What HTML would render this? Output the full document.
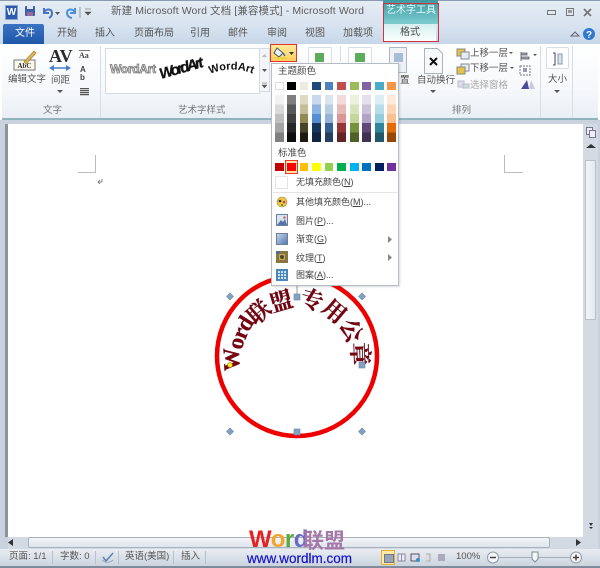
<!DOCTYPE html>
<html><head><meta charset="utf-8">
<style>
html,body{margin:0;padding:0}
body{width:600px;height:568px;overflow:hidden;position:relative;background:#fff;font-family:"Liberation Sans","Noto Sans CJK SC",sans-serif;font-size:9px;color:#555}
.a{position:absolute}
.t{position:absolute;white-space:nowrap;line-height:12px}
.sw{position:absolute;width:8.500px;height:8px}
.col{position:absolute;top:95px;width:8.500px;height:47px}
.sep{position:absolute;width:1px;background:#d5dde6}
.mi{position:absolute;left:296px;white-space:nowrap;font-size:9px;color:#444;line-height:12px}
</style></head><body>
<!-- window frame / title -->
<div class="a" style="left:0;top:0;width:600px;height:24px;background:linear-gradient(#e6edf5,#d8e3ef)"></div>
<div class="a" style="left:0;top:0;width:600px;height:1px;background:#8a9bb0"></div>
<!-- tab band -->
<div class="a" style="left:0;top:24px;width:600px;height:20px;background:linear-gradient(#d9e4f0,#c7d7e8)"></div>
<!-- ribbon -->
<div class="a" style="left:2px;top:44px;width:596px;height:74px;background:linear-gradient(#fff,#f6f8fb 60%,#eaeff5);border-bottom:2px solid #8fb4bc"></div>
<div class="a" style="left:0;top:120px;width:600px;height:429px;background:#c9d2dd"></div>
<div class="a" style="left:5px;top:124px;width:3px;height:413px;background:#8e9499"></div>
<!-- page -->
<div class="a" style="left:8px;top:124px;width:575px;height:413px;background:#fff"></div>

<!-- QAT -->
<div class="a" style="left:5px;top:5px;width:11px;height:13px;background:#2a5bb0;border:1px solid #8aa3c8;color:#fff;font:bold 10px/13px 'Liberation Sans';text-align:center">W</div>
<div class="a" style="left:25px;top:6px;width:10px;height:10px;background:#3d5fa8;border-radius:1px"></div>
<div class="a" style="left:27px;top:6px;width:6px;height:3px;background:#dfe7f2"></div>
<div class="a" style="left:27px;top:12px;width:6px;height:4px;background:#9a6a9c"></div>
<svg class="a" style="left:40px;top:4px" width="50" height="16"><path d="M4 4v5h5M4 8c3-4 8-3 8 1 0 2-1 4-3 5" fill="none" stroke="#4674c4" stroke-width="2"/><path d="M15 8h5l-2.500 3z" fill="#555"/><path d="M35 4v5h-5M35 8c-3-4-8-3-8 1 0 3 3 5 5 5" fill="none" stroke="#4a90d8" stroke-width="2"/><path d="M40 3v11" stroke="#99a" stroke-width="1"/></svg>
<svg class="a" style="left:84px;top:8px" width="8" height="10"><path d="M1 1h6M1 4h6l-3 3z" fill="#555" stroke="#555" stroke-width=".6"/></svg>
<div class="t" style="left:111px;top:5px;font-size:10.500px;color:#5c5c5c;letter-spacing:.1px">新建 Microsoft Word 文档 [兼容模式]  -  Microsoft Word</div>

<!-- window buttons -->
<svg class="a" style="left:544px;top:6px" width="50" height="14"><rect x="3.500" y="4.500" width="8" height="4" fill="none" stroke="#777"/><rect x="22.500" y="2.500" width="7" height="7" fill="none" stroke="#777"/><rect x="24" y="4" width="4" height="3" fill="#999"/><path d="M40 3l7 7M47 3l-7 7" stroke="#777" stroke-width="1.800"/></svg>

<!-- contextual tab -->
<div class="a" style="left:383px;top:0;width:55px;height:24px;background:linear-gradient(#3e9aa0,#7dcdd0)"></div>
<div class="t" style="left:386px;top:5px;font-size:10px;color:#e8ffff">艺术字工具</div>
<div class="a" style="left:383px;top:24px;width:53px;height:17px;background:linear-gradient(#d7f0f0,#fbfefe)"></div>
<div class="a" style="left:383px;top:3px;width:54px;height:37px;border:1px solid #d43040"></div>
<div class="t" style="left:400px;top:27px;font-size:10px;color:#4c4c4c">格式</div>

<!-- tabs -->
<div class="a" style="left:3px;top:24px;width:41px;height:20px;background:linear-gradient(#3a72c4,#1f56a8);border-radius:2px 2px 0 0"></div>
<div class="t" style="left:15px;top:28px;font-size:10px;color:#fff">文件</div>
<div class="t" style="left:57px;top:28px;font-size:10px">开始</div>
<div class="t" style="left:95px;top:28px;font-size:10px">插入</div>
<div class="t" style="left:134px;top:28px;font-size:10px">页面布局</div>
<div class="t" style="left:190px;top:28px;font-size:10px">引用</div>
<div class="t" style="left:228px;top:28px;font-size:10px">邮件</div>
<div class="t" style="left:267px;top:28px;font-size:10px">审阅</div>
<div class="t" style="left:305px;top:28px;font-size:10px">视图</div>
<div class="t" style="left:343px;top:28px;font-size:10px">加载项</div>
<svg class="a" style="left:568px;top:27px" width="30" height="16"><path d="M3 9l4-4 4 4z" fill="none" stroke="#667" /><circle cx="21" cy="7" r="6" fill="#2f79d0"/><text x="21" y="11" font-size="10" font-weight="bold" font-family="Liberation Sans" text-anchor="middle" fill="#fff">?</text></svg>

<!-- text group -->
<svg class="a" style="left:12px;top:48px" width="26" height="26"><rect x="2" y="12" width="21" height="10" fill="#fdf8ec" stroke="#777"/><text x="12.500" y="20" font-size="7" font-family="Liberation Serif" font-weight="bold" text-anchor="middle" fill="#333">AbC</text><path d="M12 14L22 3l2 2-10 11z" fill="#e4b74a" stroke="#97803c" stroke-width=".7"/></svg>
<div class="t" style="left:8px;top:74px;font-size:9.500px">编辑文字</div>
<div class="t" style="left:49px;top:46px;font:bold 18px/20px 'Liberation Serif';color:#2a2a2a">AV</div>
<svg class="a" style="left:48px;top:64px" width="24" height="8"><path d="M2 4h20" stroke="#4a7fd0" stroke-width="1.500"/><path d="M1 4l5-3v6zM23 4l-5-3v6z" fill="#4a7fd0"/></svg>
<div class="t" style="left:51px;top:75px;font-size:9.500px">间距</div>
<svg class="a" style="left:57px;top:90px" width="6" height="4"><path d="M0 0h6l-3 3z" fill="#555"/></svg>
<div class="a" style="left:79px;top:50px;width:11px;height:1px;background:#777"></div>
<div class="t" style="left:79px;top:51px;font:bold 8px/10px 'Liberation Serif';color:#444">Aa</div>
<div class="t" style="left:80px;top:66px;font:bold 8px/8px 'Liberation Sans';color:#444">A<br>b</div>
<div class="a" style="left:80px;top:88px;width:9px;height:8px;background:repeating-linear-gradient(#555 0 1px,#ccc 1px 2px)"></div>
<div class="sep" style="left:100px;top:46px;height:72px"></div>
<div class="t" style="left:43px;top:105px;font-size:9.500px;color:#777">文字</div>

<!-- wordart gallery -->
<div class="a" style="left:105px;top:48px;width:153px;height:44px;background:#fff;border:1px solid #d4dbe4"></div>
<div class="t" style="left:110px;top:62px;font:bold 12px/14px 'Liberation Sans';color:#ddd;-webkit-text-stroke:.8px #777;letter-spacing:-.3px">WordArt</div>
<svg class="a" style="left:158px;top:54px" width="50" height="30"><text x="3" y="25" font-size="15" font-family="Liberation Sans" font-weight="bold" font-style="italic" fill="#111" stroke="#111" stroke-width=".3" transform="rotate(-16 3 25)" textLength="45">WordArt</text></svg>
<svg class="a" style="left:208px;top:60px" width="48" height="20"><path id="wa" d="M2 14Q23 5 46 14" fill="none"/><text font-size="11" font-family="Liberation Sans" font-weight="bold" fill="#111"><textPath href="#wa" textLength="44">WordArt</textPath></text></svg>
<div class="a" style="left:259px;top:48px;width:11px;height:44px;background:#f3f5f8;border:1px solid #d4dbe4;box-sizing:border-box"></div>
<svg class="a" style="left:259px;top:50px" width="11" height="40"><path d="M3 7l2.500-3L8 7z" fill="#bbb"/><path d="M3 19h5l-2.500 3z" fill="#555"/><path d="M3 33h5M3 35h5l-2.500 3z" stroke="#555" stroke-width=".5" fill="#555"/></svg>
<div class="t" style="left:178px;top:105px;font-size:9.500px;color:#777">艺术字样式</div>

<!-- fill button -->
<div class="a" style="left:270px;top:44px;width:27px;height:18px;background:linear-gradient(#fdeb9c,#fbcf5c);border:1px solid #e83030;box-sizing:border-box"></div>
<svg class="a" style="left:272px;top:46px" width="24" height="14"><path d="M5 2l6 5-4 4-5-4z" fill="#eef3fa" stroke="#456"/><path d="M11 7l2 3" stroke="#3a6cc0" stroke-width="1.500"/><rect x="2" y="11" width="13" height="2" fill="#e8d24a"/><path d="M17 6h5l-2.500 3z" fill="#333"/></svg>

<!-- drawing tools behind menu -->
<div class="a" style="left:308px;top:47px;width:22px;height:15px;background:#fff;border:1px solid #d8dee6;border-bottom:0"></div>
<div class="a" style="left:315px;top:53px;width:9px;height:9px;background:#5dab5d"></div>
<div class="a" style="left:348px;top:47px;width:22px;height:15px;background:#fff;border:1px solid #d8dee6;border-bottom:0"></div>
<div class="a" style="left:355px;top:53px;width:10px;height:9px;background:#5dab5d"></div>
<div class="sep" style="left:340px;top:46px;height:16px"></div>

<!-- arrange -->
<svg class="a" style="left:389px;top:47px" width="20" height="27"><rect x=".5" y=".5" width="17" height="25" fill="#eef2f7" stroke="#aeb8c4"/><rect x="5" y="6" width="9" height="9" fill="#a9bcd6"/></svg>
<div class="t" style="left:400px;top:75px;font-size:9.500px;color:#444">置</div>
<svg class="a" style="left:424px;top:48px" width="20" height="27"><path d="M.5.5h13l5 5v20H.5z" fill="#f7f9fc" stroke="#aab2bd"/><path d="M6 10l7 7M13 10l-7 7" stroke="#111" stroke-width="2"/></svg>
<div class="t" style="left:417px;top:75px;font-size:9.500px">自动换行</div>
<svg class="a" style="left:430px;top:90px" width="6" height="4"><path d="M0 0h6l-3 3z" fill="#555"/></svg>
<svg class="a" style="left:456px;top:47px" width="15" height="42"><rect x="1" y="2" width="8" height="7" fill="#e4c24c" stroke="#887"/><rect x="5" y="5" width="8" height="7" fill="#e6ecf4" stroke="#889"/><rect x="5" y="17" width="8" height="7" fill="#e6ecf4" stroke="#889"/><rect x="1" y="20" width="8" height="7" fill="#e4c24c" stroke="#887"/><rect x="2" y="34" width="6" height="6" fill="#dde" stroke="#bbc"/><rect x="7" y="37" width="6" height="4" fill="#cdd" stroke="#bbc"/></svg>
<div class="t" style="left:470px;top:48px;font-size:9.500px">上移一层</div>
<div class="t" style="left:470px;top:63px;font-size:9.500px">下移一层</div>
<div class="t" style="left:470px;top:80px;font-size:9.500px;color:#aaa">选择窗格</div>
<svg class="a" style="left:509px;top:52px" width="30" height="42"><path d="M0 0h4l-2 2zM1 15h4l-2 2z" fill="#555"/><path d="M12 -1v10M12 1h6v2h-6M12 5h8v2h-8" stroke="#556" fill="#aaa" stroke-width=".8"/><path d="M28 2h-4l2 2z" fill="#555"/><rect x="11" y="14" width="10" height="9" fill="none" stroke="#778" stroke-dasharray="2 1"/><rect x="14" y="16" width="4" height="4" fill="#99a"/><path d="M12 37l6-9 2 9z" fill="#4b4a9b"/><path d="M20 37l2-9 4 9z" fill="#c8c8e0"/></svg>
<div class="t" style="left:452px;top:105px;font-size:9.500px;color:#777">排列</div>
<div class="sep" style="left:540px;top:46px;height:72px"></div>
<div class="a" style="left:546px;top:47px;width:21px;height:20px;background:#fff;border:1px solid #d8dee6;border-radius:2px"></div>
<svg class="a" style="left:552px;top:52px" width="12" height="14"><path d="M1 1h2v12H1M3 2v10" stroke="#445" fill="none"/><rect x="6" y="2" width="4" height="10" fill="#d9e2ee" stroke="#8898ab"/></svg>
<div class="t" style="left:548px;top:74px;font-size:9.500px">大小</div>
<svg class="a" style="left:554px;top:90px" width="6" height="4"><path d="M0 0h6l-3 3z" fill="#555"/></svg>
<div class="sep" style="left:572px;top:46px;height:72px"></div>

<!-- page margins -->
<div class="a" style="left:78px;top:155px;width:17px;height:17px;border-right:1px solid #bbb;border-bottom:1px solid #bbb"></div>
<div class="a" style="left:504px;top:155px;width:18px;height:17px;border-left:1px solid #bbb;border-bottom:1px solid #bbb"></div>
<svg class="a" style="left:96px;top:178px" width="7" height="7"><path d="M6 1v3H2M2 4l2-2M2 4l2 2" stroke="#666" fill="none" stroke-width=".8"/></svg>

<!-- stamp: centre (297,356) -->
<svg class="a" style="left:200px;top:270px" width="200" height="180">
<circle cx="97" cy="86" r="80" fill="none" stroke="#ee0000" stroke-width="4.500"/>
<g font-family="'Liberation Serif','Noto Serif CJK SC',serif" font-weight="bold" fill="#7c0010" stroke="#3c0008" stroke-width=".25" text-anchor="middle" font-size="23">
<text transform="translate(97 86) rotate(-93) translate(0 -66)" y="8">W</text>
<text transform="translate(97 86) rotate(-78) translate(0 -63)" y="8">o</text>
<text transform="translate(97 86) rotate(-68) translate(0 -62)" y="8">r</text>
<text transform="translate(97 86) rotate(-58) translate(0 -62)" y="8">d</text>
<text transform="translate(97 86) rotate(-41) translate(0 -58)" y="8">联</text>
<text transform="translate(97 86) rotate(-16) translate(0 -57)" y="8">盟</text>
<text transform="translate(97 86) rotate(15) translate(0 -58)" y="8">专</text>
<text transform="translate(97 86) rotate(40) translate(0 -58)" y="8">用</text>
<text transform="translate(97 86) rotate(65) translate(0 -60)" y="8">公</text>
<text transform="translate(97 86) rotate(88) translate(0 -63)" y="8">章</text>
</g>
<path d="M97 10v16" stroke="#999" stroke-width="1"/>
<g fill="#83a1c4" stroke="#6d87a6" stroke-width=".6">
<path d="M30 23l3.500 3.500-3.500 3.500-3.500-3.500zM162 23l3.500 3.500-3.500 3.500-3.500-3.500zM30 158l3.500 3.500-3.500 3.500-3.500-3.500zM162 158l3.500 3.500-3.500 3.500-3.500-3.500z"/>
<rect x="94" y="24" width="6" height="6"/><rect x="159" y="92" width="6" height="6"/><rect x="94" y="159" width="6" height="6"/>
</g>
<circle cx="30" cy="95" r="2.500" fill="#ffee22" stroke="#997700" stroke-width=".6"/>
</svg>

<!-- dropdown menu -->
<div class="a" style="left:271px;top:63px;width:128px;height:223px;background:#fff;border:1px solid #b5bcc5;box-sizing:border-box;box-shadow:1px 1px 2px rgba(0,0,0,.15)"></div>
<div class="t" style="left:278px;top:66px;font-size:9.500px;color:#444">主题颜色</div>
<div class="t" style="left:278px;top:148px;font-size:9.500px;color:#444">标准色</div>
<!-- swatches -->
<div class="sw" style="left:275px;top:82px;background:#fff;border:1px solid #ddd;box-sizing:border-box"></div>
<div class="sw" style="left:287px;top:82px;background:#000"></div>
<div class="sw" style="left:299.500px;top:82px;background:#eeece1"></div>
<div class="sw" style="left:312px;top:82px;background:#1f497d"></div>
<div class="sw" style="left:324.500px;top:82px;background:#4f81bd"></div>
<div class="sw" style="left:337px;top:82px;background:#c0504d"></div>
<div class="sw" style="left:350px;top:82px;background:#9bbb59"></div>
<div class="sw" style="left:362px;top:82px;background:#8064a2"></div>
<div class="sw" style="left:375px;top:82px;background:#4bacc6"></div>
<div class="sw" style="left:387px;top:82px;background:#f79646"></div>
<!-- shades -->
<div class="col" style="left:275px;background:linear-gradient(#f2f2f2 0 20%,#d9d9d9 20% 40%,#bfbfbf 40% 60%,#a6a6a6 60% 80%,#808080 80%)"></div>
<div class="col" style="left:287px;background:linear-gradient(#7f7f7f 0 20%,#595959 20% 40%,#404040 40% 60%,#262626 60% 80%,#0d0d0d 80%)"></div>
<div class="col" style="left:299.500px;background:linear-gradient(#ddd9c3 0 20%,#c4bd97 20% 40%,#938953 40% 60%,#494429 60% 80%,#1d1b10 80%)"></div>
<div class="col" style="left:312px;background:linear-gradient(#c6d9f0 0 20%,#8db3e2 20% 40%,#548dd4 40% 60%,#17365d 60% 80%,#0f243e 80%)"></div>
<div class="col" style="left:324.500px;background:linear-gradient(#dbe5f1 0 20%,#b8cce4 20% 40%,#95b3d7 40% 60%,#366092 60% 80%,#244061 80%)"></div>
<div class="col" style="left:337px;background:linear-gradient(#f2dcdb 0 20%,#e5b9b7 20% 40%,#d99694 40% 60%,#953734 60% 80%,#632423 80%)"></div>
<div class="col" style="left:350px;background:linear-gradient(#ebf1dd 0 20%,#d7e3bc 20% 40%,#c3d69b 40% 60%,#76923c 60% 80%,#4f6128 80%)"></div>
<div class="col" style="left:362px;background:linear-gradient(#e5e0ec 0 20%,#ccc1d9 20% 40%,#b2a2c7 40% 60%,#5f497a 60% 80%,#3f3151 80%)"></div>
<div class="col" style="left:375px;background:linear-gradient(#dbeef3 0 20%,#b7dde8 20% 40%,#92cddc 40% 60%,#31859b 60% 80%,#205867 80%)"></div>
<div class="col" style="left:387px;background:linear-gradient(#fdeada 0 20%,#fbd5b5 20% 40%,#fac08f 40% 60%,#e36c09 60% 80%,#974806 80%)"></div>
<!-- standard -->
<div class="sw" style="left:275px;top:163px;background:#c00000"></div>
<div class="a" style="left:285px;top:160px;width:13px;height:14px;border:1px solid #e33;background:#fde5a0;box-sizing:border-box"></div>
<div class="sw" style="left:287px;top:163px;background:#ff0000"></div>
<div class="sw" style="left:299.500px;top:163px;background:#ffc000"></div>
<div class="sw" style="left:312px;top:163px;background:#ffff00"></div>
<div class="sw" style="left:324.500px;top:163px;background:#92d050"></div>
<div class="sw" style="left:337px;top:163px;background:#00b050"></div>
<div class="sw" style="left:350px;top:163px;background:#00b0f0"></div>
<div class="sw" style="left:362px;top:163px;background:#0070c0"></div>
<div class="sw" style="left:375px;top:163px;background:#002060"></div>
<div class="sw" style="left:387px;top:163px;background:#7030a0"></div>
<!-- items -->
<div class="a" style="left:275px;top:176px;width:13px;height:13px;border:1px solid #e4e4e4;box-sizing:border-box"></div>
<div class="mi" style="top:176px">无填充颜色(<u>N</u>)</div>
<div class="a" style="left:273px;top:192px;width:124px;height:1px;background:#e4e4e4"></div>
<svg class="a" style="left:276px;top:196px" width="12" height="12"><circle cx="6" cy="6" r="5" fill="#ecc84a" stroke="#a08a30" stroke-width=".6"/><circle cx="4" cy="5" r="1.300" fill="#333"/><circle cx="8" cy="6" r="1.300" fill="#c44"/><circle cx="6" cy="9" r="1" fill="#3a8a3a"/></svg>
<div class="mi" style="top:196px">其他填充颜色(<u>M</u>)...</div>
<svg class="a" style="left:276px;top:214px" width="12" height="12"><rect x=".5" y=".5" width="11" height="11" fill="#d8e4f2" stroke="#6a7f9c"/><path d="M1 11l4-5 2 2 2-3 2 6z" fill="#5a72a8"/><circle cx="8.500" cy="3.500" r="1.300" fill="#d66"/></svg>
<div class="mi" style="top:215px">图片(<u>P</u>)...</div>
<div class="a" style="left:276px;top:233px;width:12px;height:12px;background:linear-gradient(135deg,#c4d6ee,#5578b0);border:1px solid #6d7f9a;box-sizing:border-box"></div>
<div class="mi" style="top:233px">渐变(<u>G</u>)</div>
<svg class="a" style="left:388px;top:236px" width="5" height="7"><path d="M0 0l4 3.500L0 7z" fill="#888"/></svg>
<svg class="a" style="left:276px;top:251px" width="12" height="12"><rect width="12" height="12" fill="#8a7440"/><rect x="3" y="3" width="6" height="6" fill="#c2a85e"/><circle cx="6" cy="6" r="2" fill="#4a4a2a"/><rect x="0" y="0" width="4" height="3" fill="#556d88"/></svg>
<div class="mi" style="top:252px">纹理(<u>T</u>)</div>
<svg class="a" style="left:388px;top:254px" width="5" height="7"><path d="M0 0l4 3.500L0 7z" fill="#888"/></svg>
<div class="a" style="left:276px;top:269px;width:12px;height:12px;box-sizing:border-box;border:1px solid #4a86b8;background:repeating-linear-gradient(90deg,#4a86b8 0 1px,transparent 1px 3px),repeating-linear-gradient(#4a86b8 0 1px,#cfe4f3 1px 3px)"></div>
<div class="mi" style="top:269px">图案(<u>A</u>)...</div>

<!-- vertical scrollbar -->
<div class="a" style="left:583px;top:124px;width:15px;height:425px;background:#d3dae3"></div>
<svg class="a" style="left:586px;top:127px" width="11" height="12"><rect x=".5" y=".5" width="6" height="7" fill="#eef" stroke="#778"/><rect x="3.500" y="3.500" width="6" height="7" fill="#eef" stroke="#778"/></svg>
<svg class="a" style="left:586px;top:143px" width="10" height="6"><path d="M0 5l5-4 5 4z" fill="#333"/></svg>
<div class="a" style="left:585px;top:160px;width:11px;height:160px;background:linear-gradient(90deg,#f2f5f8,#e4e9ef);border:1px solid #b7c0cb;box-sizing:border-box"></div>
<svg class="a" style="left:587px;top:522px" width="8" height="8"><path d="M2 1h4L4 4zM2 5h4L4 7z" fill="#333"/></svg>

<!-- horizontal scrollbar -->
<div class="a" style="left:8px;top:537px;width:575px;height:12px;background:#d3dae3"></div>
<svg class="a" style="left:7px;top:539px" width="8" height="8"><path d="M6 0v7L1 3.500z" fill="#333"/></svg>
<div class="a" style="left:28px;top:537px;width:522px;height:11px;background:linear-gradient(#f2f5f8,#dfe5ec);border:1px solid #a8b2be;border-radius:2px;box-sizing:border-box"></div>
<svg class="a" style="left:576px;top:539px" width="6" height="8"><path d="M0 0v7l5-3.500z" fill="#333"/></svg>

<!-- status bar -->
<div class="a" style="left:0;top:549px;width:600px;height:17px;background:linear-gradient(#e9edf2,#ccd4de)"></div>
<div class="a" style="left:0;top:566px;width:600px;height:2px;background:#7d8b9c"></div>
<div class="t" style="left:9px;top:551px;font-size:9.500px">页面: 1/1</div>
<div class="sep" style="left:52px;top:551px;height:13px;background:#b7c0cb"></div>
<div class="t" style="left:60px;top:551px;font-size:9.500px">字数: 0</div>
<div class="sep" style="left:95px;top:551px;height:13px;background:#b7c0cb"></div>
<svg class="a" style="left:101px;top:551px" width="14" height="13"><path d="M2 6l3 4 7-8" fill="none" stroke="#5c7fb8" stroke-width="1.500"/><path d="M1 9c3 3 8 3 11 0" stroke="#99a8c0" fill="none"/></svg>
<div class="sep" style="left:118px;top:551px;height:13px;background:#b7c0cb"></div>
<div class="t" style="left:125px;top:551px;font-size:9.500px">英语(美国)</div>
<div class="sep" style="left:173px;top:551px;height:13px;background:#b7c0cb"></div>
<div class="t" style="left:181px;top:551px;font-size:9.500px">插入</div>
<div class="sep" style="left:205px;top:551px;height:13px;background:#b7c0cb"></div>

<!-- watermark -->
<div class="t" style="left:249px;top:525px;font:bold 24px/30px 'Liberation Sans';letter-spacing:-.5px"><span style="color:#ea1f1f">W</span><span style="color:#f2a42a">o</span><span style="color:#5ca83c">r</span><span style="color:#6a6ac0">d</span></div>
<div class="t" style="left:303px;top:526px;font:bold 21px/28px 'Noto Sans CJK SC',sans-serif;color:#a478a8">联盟</div>
<div class="t" style="left:247px;top:550px;font:13.500px/17px 'Liberation Sans';color:#1515cc;-webkit-text-stroke:.2px #1515cc">www.wordlm.com</div>

<!-- views & zoom -->
<div class="a" style="left:381px;top:550px;width:14px;height:15px;background:#fde9a8;border:1px solid #e0b040;box-sizing:border-box"></div>
<div class="a" style="left:384px;top:554px;width:8px;height:7px;background:#98a4b4;border:1px solid #778"></div>
<svg class="a" style="left:397px;top:552px" width="50" height="12"><rect x="1" y="2" width="3.500" height="7" fill="#eef" stroke="#889"/><rect x="4.500" y="2" width="3.500" height="7" fill="#eef" stroke="#889"/><rect x="14" y="2" width="8" height="7" fill="#dde" stroke="#556"/><circle cx="21" cy="8" r="2" fill="#3a90c0"/><path d="M29 2h4v7h-4" stroke="#aaa" fill="#ddd"/><rect x="41" y="2" width="7" height="7" fill="#aab"/></svg>
<div class="t" style="left:456px;top:551px;font-size:9.500px">100%</div>
<svg class="a" style="left:486px;top:550px" width="98" height="15"><path d="M8 7.500h82" stroke="#a5aeba"/><circle cx="7" cy="7.500" r="5.500" fill="#f4f6f9" stroke="#8f9aa8"/><path d="M4 7.500h6" stroke="#444" stroke-width="1.500"/><circle cx="90" cy="7.500" r="5.500" fill="#f4f6f9" stroke="#8f9aa8"/><path d="M87 7.500h6M90 4.500v6" stroke="#444" stroke-width="1.500"/><path d="M46 2h6v7l-3 3-3-3z" fill="#f5f7fa" stroke="#808b98"/></svg>
</body></html>
